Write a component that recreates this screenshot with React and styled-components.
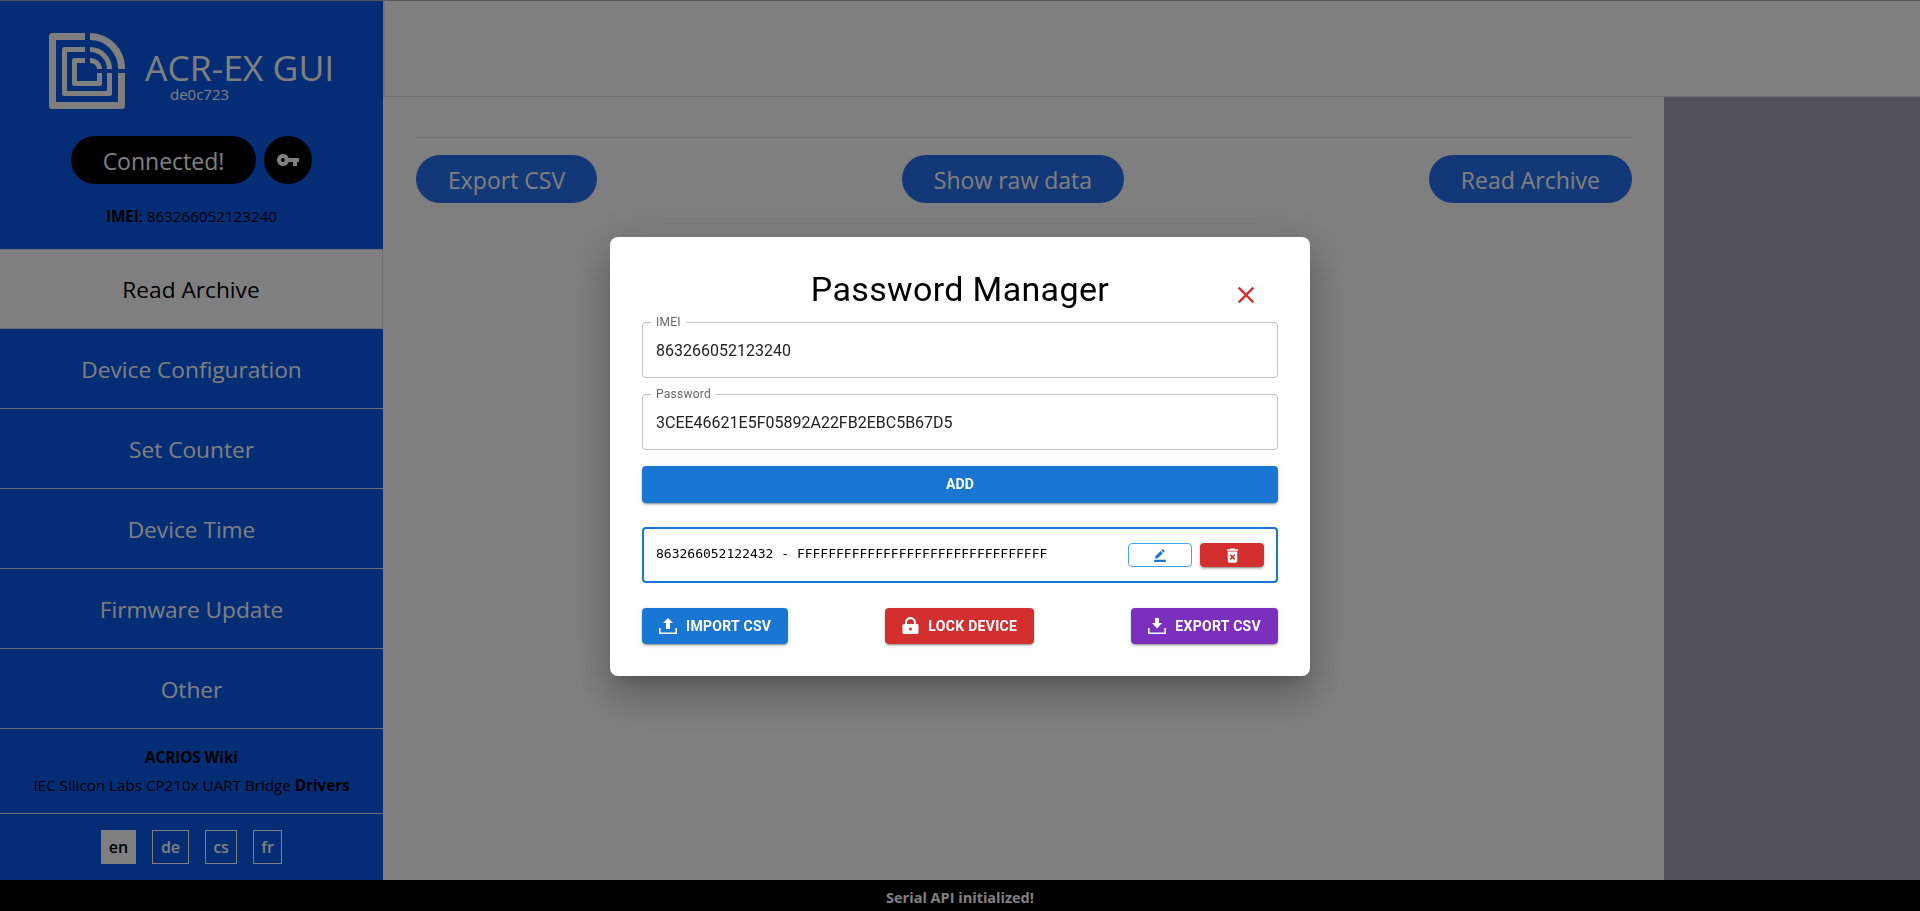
import React from 'react'
import styled, { createGlobalStyle } from 'styled-components'
import { MdVpnKey, MdClose, MdBorderColor, MdDeleteForever } from 'react-icons/md'

const GlobalStyle = createGlobalStyle`
  html, body {
    margin: 0;
    height: 100%;
    overflow: hidden;
  }
  body {
    font-family: "Open Sans", "Noto Sans", sans-serif;
    background: #ffffff;
  }
  * {
    box-sizing: border-box;
  }
`

const NAV_ITEMS = ['Read Archive', 'Device Configuration', 'Set Counter', 'Device Time', 'Firmware Update', 'Other']
const LANGS = [
  { code: 'en', width: 35, active: true },
  { code: 'de', width: 37 },
  { code: 'cs', width: 32 },
  { code: 'fr', width: 29 },
]

function Logo() {
  return (
    <svg width="76" height="76" viewBox="0 0 76 76" fill="none" stroke="#ffffff" strokeLinejoin="round">
      <path d="M36 3.5H3.5V72.5H72.5V40" strokeWidth="7" />
      <path d="M41 3.5A31.5 32 0 0 1 72.5 36" strokeWidth="7" />
      <path d="M36 16.5H15.5V60.5H60.5V40" strokeWidth="5" />
      <path d="M41 16.5A19.5 19.5 0 0 1 60.5 36" strokeWidth="5" />
      <path d="M36 27.5H25.5V50.5H50.5V40" strokeWidth="5" />
      <path d="M41 27.5A9.5 8.5 0 0 1 50.5 36" strokeWidth="5" />
    </svg>
  )
}

function UploadIcon() {
  return (
    <svg width="18" height="16" viewBox="0 0 18 16" fill="currentColor">
      <path d="M9 0L4 5h3v6h4V5h3z" />
      <path d="M0 10h1.6v4.4h14.8V10H18v6H0z" />
    </svg>
  )
}

function DownloadIcon() {
  return (
    <svg width="18" height="16" viewBox="0 0 18 16" fill="currentColor">
      <path d="M7 0h4v5h3l-5 5.5L4 5h3z" />
      <path d="M0 10h1.6v4.4h14.8V10H18v6H0z" />
    </svg>
  )
}

function LockIcon() {
  return (
    <svg width="17" height="17" viewBox="0 0 17 17" fill="currentColor">
      <path
        fillRule="evenodd"
        d="M3 7V5.5C3 2.5 5.5 0 8.5 0S14 2.5 14 5.5V7h1c.8 0 1.5.7 1.5 1.5v7c0 .8-.7 1.5-1.5 1.5H2c-.8 0-1.5-.7-1.5-1.5v-7C.5 7.7 1.2 7 2 7h1zM5 7h7V5.5C12 3.6 10.4 2 8.5 2S5 3.6 5 5.5V7zM8.5 10.5a1.5 1.5 0 1 0 0 3 1.5 1.5 0 0 0 0-3z"
      />
    </svg>
  )
}

export default function App() {
  return (
    <Page>
      <GlobalStyle />
      <Main>
        <Sidebar>
          <Brand>
            <BrandRow>
              <Logo />
              <BrandText>
                <h1>ACR-EX GUI</h1>
                <span>de0c723</span>
              </BrandText>
            </BrandRow>
            <ConnectRow>
              <ConnectButton>Connected!</ConnectButton>
              <KeyButton><MdVpnKey size={24} /></KeyButton>
            </ConnectRow>
            <Imei><b>IMEI</b>: 863266052123240</Imei>
          </Brand>
          <Nav>
            {NAV_ITEMS.map((item, i) => (
              <NavItem key={item} $active={i === 0}>{item}</NavItem>
            ))}
          </Nav>
          <Links>
            <b>ACRIOS Wiki</b>
            <span>IEC Silicon Labs CP210x UART Bridge <b>Drivers</b></span>
          </Links>
          <Langs>
            {LANGS.map((l) => (
              <LangButton key={l.code} $active={l.active} $width={l.width}>{l.code}</LangButton>
            ))}
          </Langs>
        </Sidebar>
        <Content>
          <TopBar />
          <ContentBody>
            <Archive>
              <ArchiveBar>
                <PillButton>Export CSV</PillButton>
                <PillButton>Show raw data</PillButton>
                <PillButton>Read Archive</PillButton>
              </ArchiveBar>
            </Archive>
            <SidePanel />
          </ContentBody>
        </Content>
      </Main>
      <StatusBar>Serial API initialized!</StatusBar>
      <Backdrop>
        <Modal>
          <ModalTitle>
            Password Manager
            <CloseIcon><MdClose size={28} /></CloseIcon>
          </ModalTitle>
          <Fields>
            <Field>
              <legend>IMEI</legend>
              <span>863266052123240</span>
            </Field>
            <Field>
              <legend>Password</legend>
              <span>3CEE46621E5F05892A22FB2EBC5B67D5</span>
            </Field>
          </Fields>
          <AddButton>ADD</AddButton>
          <ListBox>
            <code>863266052122432 - FFFFFFFFFFFFFFFFFFFFFFFFFFFFFFFF</code>
            <RowActions>
              <SmallButton $outlined><MdBorderColor size={14} /></SmallButton>
              <SmallButton><MdDeleteForever size={19} /></SmallButton>
            </RowActions>
          </ListBox>
          <ModalActions>
            <ActionButton $bg="#1976d2"><UploadIcon />Import CSV</ActionButton>
            <ActionButton $bg="#d32f2f"><LockIcon />Lock Device</ActionButton>
            <ActionButton $bg="#7b2fbf"><DownloadIcon />Export CSV</ActionButton>
          </ModalActions>
        </Modal>
      </Backdrop>
    </Page>
  )
}

const Page = styled.div`
  height: 911px;
  display: flex;
  flex-direction: column;
  border-top: 1px solid #aaaaaa;
`

const Main = styled.div`
  flex: 1;
  display: flex;
  min-height: 0;
`

const Sidebar = styled.aside`
  width: 383px;
  background: #0a5aec;
  display: flex;
  flex-direction: column;
  color: #ffffff;
`

const Brand = styled.div`
  height: 248px;
  padding-top: 32px;
  display: flex;
  flex-direction: column;
  align-items: center;
`

const BrandRow = styled.div`
  display: flex;
  align-items: flex-start;
  gap: 20px;
  width: 100%;
  padding-left: 49px;
`

const BrandText = styled.div`
  padding-top: 14px;

  h1 {
    margin: 0;
    font-size: 35.5px;
    line-height: 40px;
    font-weight: 400;
    white-space: nowrap;
  }

  span {
    display: block;
    margin: -2px 0 0 25px;
    font-size: 15px;
    line-height: 18px;
  }
`

const ConnectRow = styled.div`
  display: flex;
  gap: 8px;
  margin-top: 27px;
`

const ConnectButton = styled.div`
  width: 185px;
  height: 48px;
  padding-top: 2px;
  border-radius: 24px;
  background: #000000;
  font-size: 23px;
  display: flex;
  align-items: center;
  justify-content: center;
`

const KeyButton = styled.div`
  width: 48px;
  height: 48px;
  border-radius: 50%;
  background: #000000;
  display: flex;
  align-items: center;
  justify-content: center;
`

const Imei = styled.div`
  margin-top: 22px;
  font-size: 15.2px;
  line-height: 20px;
  color: #000000;
`

const Nav = styled.nav`
  display: flex;
  flex-direction: column;
`

const NavItem = styled.div`
  height: 80px;
  display: flex;
  align-items: center;
  justify-content: center;
  font-size: 22.7px;
  padding-top: ${({ $active }) => ($active ? '0' : '2px')};
  border-bottom: 1px solid #dddddd;
  border-top: ${({ $active }) => ($active ? '1px solid #dddddd' : 'none')};
  border-right: ${({ $active }) => ($active ? '1px solid #dddddd' : 'none')};
  background: ${({ $active }) => ($active ? '#ffffff' : 'transparent')};
  color: ${({ $active }) => ($active ? '#000000' : '#ffffff')};
`

const Links = styled.div`
  height: 85px;
  display: flex;
  flex-direction: column;
  align-items: center;
  gap: 8px;
  padding-top: 18px;
  font-size: 15.2px;
  line-height: 20px;
  color: #000000;
  border-bottom: 1px solid #dddddd;
`

const Langs = styled.div`
  flex: 1;
  display: flex;
  justify-content: center;
  gap: 16px;
  padding-top: 16px;
`

const LangButton = styled.div`
  width: ${({ $width }) => $width}px;
  height: 34px;
  display: flex;
  align-items: center;
  justify-content: center;
  font-size: 16px;
  font-weight: 600;
  border: 1px solid #ffffff;
  background: ${({ $active }) => ($active ? '#ffffff' : 'transparent')};
  color: ${({ $active }) => ($active ? '#000000' : '#ffffff')};
`

const Content = styled.main`
  flex: 1;
  display: flex;
  flex-direction: column;
  min-width: 0;
`

const TopBar = styled.div`
  height: 96px;
  border-bottom: 1px solid #dddddd;
  border-left: 2px solid #e4e4e4;
`

const ContentBody = styled.div`
  flex: 1;
  display: flex;
  min-height: 0;
`

const Archive = styled.section`
  flex: 1;
  padding: 40px 32px 0 33px;
`

const ArchiveBar = styled.div`
  display: flex;
  justify-content: space-between;
  border-top: 1px solid #dddddd;
  padding-top: 17px;
`

const PillButton = styled.div`
  height: 48px;
  padding: 1px 32px 0;
  border-radius: 24px;
  background: #2670f0;
  color: #ffffff;
  font-size: 23px;
  display: flex;
  align-items: center;
`

const SidePanel = styled.div`
  width: 256px;
  background: #a0a5b2;
`

const StatusBar = styled.footer`
  height: 31px;
  padding-top: 3px;
  background: #000000;
  color: #ffffff;
  font-size: 14.5px;
  font-weight: 700;
  display: flex;
  align-items: center;
  justify-content: center;
`

const Backdrop = styled.div`
  position: fixed;
  inset: 0;
  background: rgba(0, 0, 0, 0.5);
  display: flex;
  align-items: center;
  justify-content: center;
  font-family: Roboto, sans-serif;
`

const Modal = styled.div`
  width: 700px;
  height: 439px;
  margin-top: 2px;
  background: #ffffff;
  border-radius: 8px;
  padding: 32px;
  color: #000000;
  box-shadow: 0 11px 15px -7px rgba(0, 0, 0, 0.2), 0 24px 38px 3px rgba(0, 0, 0, 0.14), 0 9px 46px 8px rgba(0, 0, 0, 0.12);
  display: flex;
  flex-direction: column;
`

const ModalTitle = styled.h2`
  position: relative;
  margin: 0;
  height: 42px;
  font-size: 34px;
  line-height: 40px;
  font-weight: 400;
  text-align: center;
  letter-spacing: 0.35px;
`

const CloseIcon = styled.span`
  position: absolute;
  right: 18px;
  top: 12px;
  color: #d32f2f;
  display: flex;
`

const Fields = styled.div`
  display: flex;
  flex-direction: column;
  gap: 10px;
  margin-top: 5px;
`

const Field = styled.fieldset`
  margin: 0;
  height: 62px;
  padding: 0 14px 0 13px;
  border: 1px solid #c4c4c4;
  border-radius: 4px;
  font-size: 16px;
  color: #222222;

  legend {
    padding: 0 5px;
    margin-left: -5px;
    font-size: 12px;
    line-height: 12px;
    letter-spacing: 0.25px;
    color: #666666;
  }

  span {
    display: block;
    margin-top: 11px;
    line-height: 24px;
  }
`

const AddButton = styled.div`
  height: 37px;
  margin-top: 16px;
  padding-bottom: 2px;
  background: #1976d2;
  color: #ffffff;
  border-radius: 4px;
  font-size: 14px;
  font-weight: 700;
  letter-spacing: 0.2px;
  display: flex;
  align-items: center;
  justify-content: center;
  box-shadow: 0 3px 1px -2px rgba(0, 0, 0, 0.2), 0 2px 2px 0 rgba(0, 0, 0, 0.14), 0 1px 5px 0 rgba(0, 0, 0, 0.12);
`

const ListBox = styled.div`
  height: 56px;
  margin-top: 24px;
  border: 2px solid #1976d2;
  border-radius: 4px;
  padding: 0 12px;
  display: flex;
  align-items: center;
  justify-content: space-between;

  code {
    font-family: "DejaVu Sans Mono", monospace;
    font-size: 13px;
    margin-top: -3px;
  }
`

const RowActions = styled.div`
  display: flex;
  gap: 8px;
`

const SmallButton = styled.div`
  width: 64px;
  height: 24px;
  border-radius: 4px;
  display: flex;
  align-items: center;
  justify-content: center;
  color: ${({ $outlined }) => ($outlined ? '#1976d2' : '#ffffff')};
  background: ${({ $outlined }) => ($outlined ? '#ffffff' : '#d32f2f')};
  border: ${({ $outlined }) => ($outlined ? '1px solid #42a5f5' : 'none')};
  box-shadow: ${({ $outlined }) => ($outlined ? 'none' : '0 3px 1px -2px rgba(0,0,0,.2), 0 2px 2px 0 rgba(0,0,0,.14), 0 1px 5px 0 rgba(0,0,0,.12)')};
`

const ModalActions = styled.div`
  display: flex;
  justify-content: space-between;
  margin-top: 25px;
`

const ActionButton = styled.div`
  height: 36px;
  padding: 0 17px 1px 17px;
  gap: 9px;
  border-radius: 4px;
  background: ${({ $bg }) => $bg};
  color: #ffffff;
  font-size: 14px;
  font-weight: 700;
  letter-spacing: 0.3px;
  text-transform: uppercase;
  display: flex;
  align-items: center;
  box-shadow: 0 3px 1px -2px rgba(0, 0, 0, 0.2), 0 2px 2px 0 rgba(0, 0, 0, 0.14), 0 1px 5px 0 rgba(0, 0, 0, 0.12);
`
